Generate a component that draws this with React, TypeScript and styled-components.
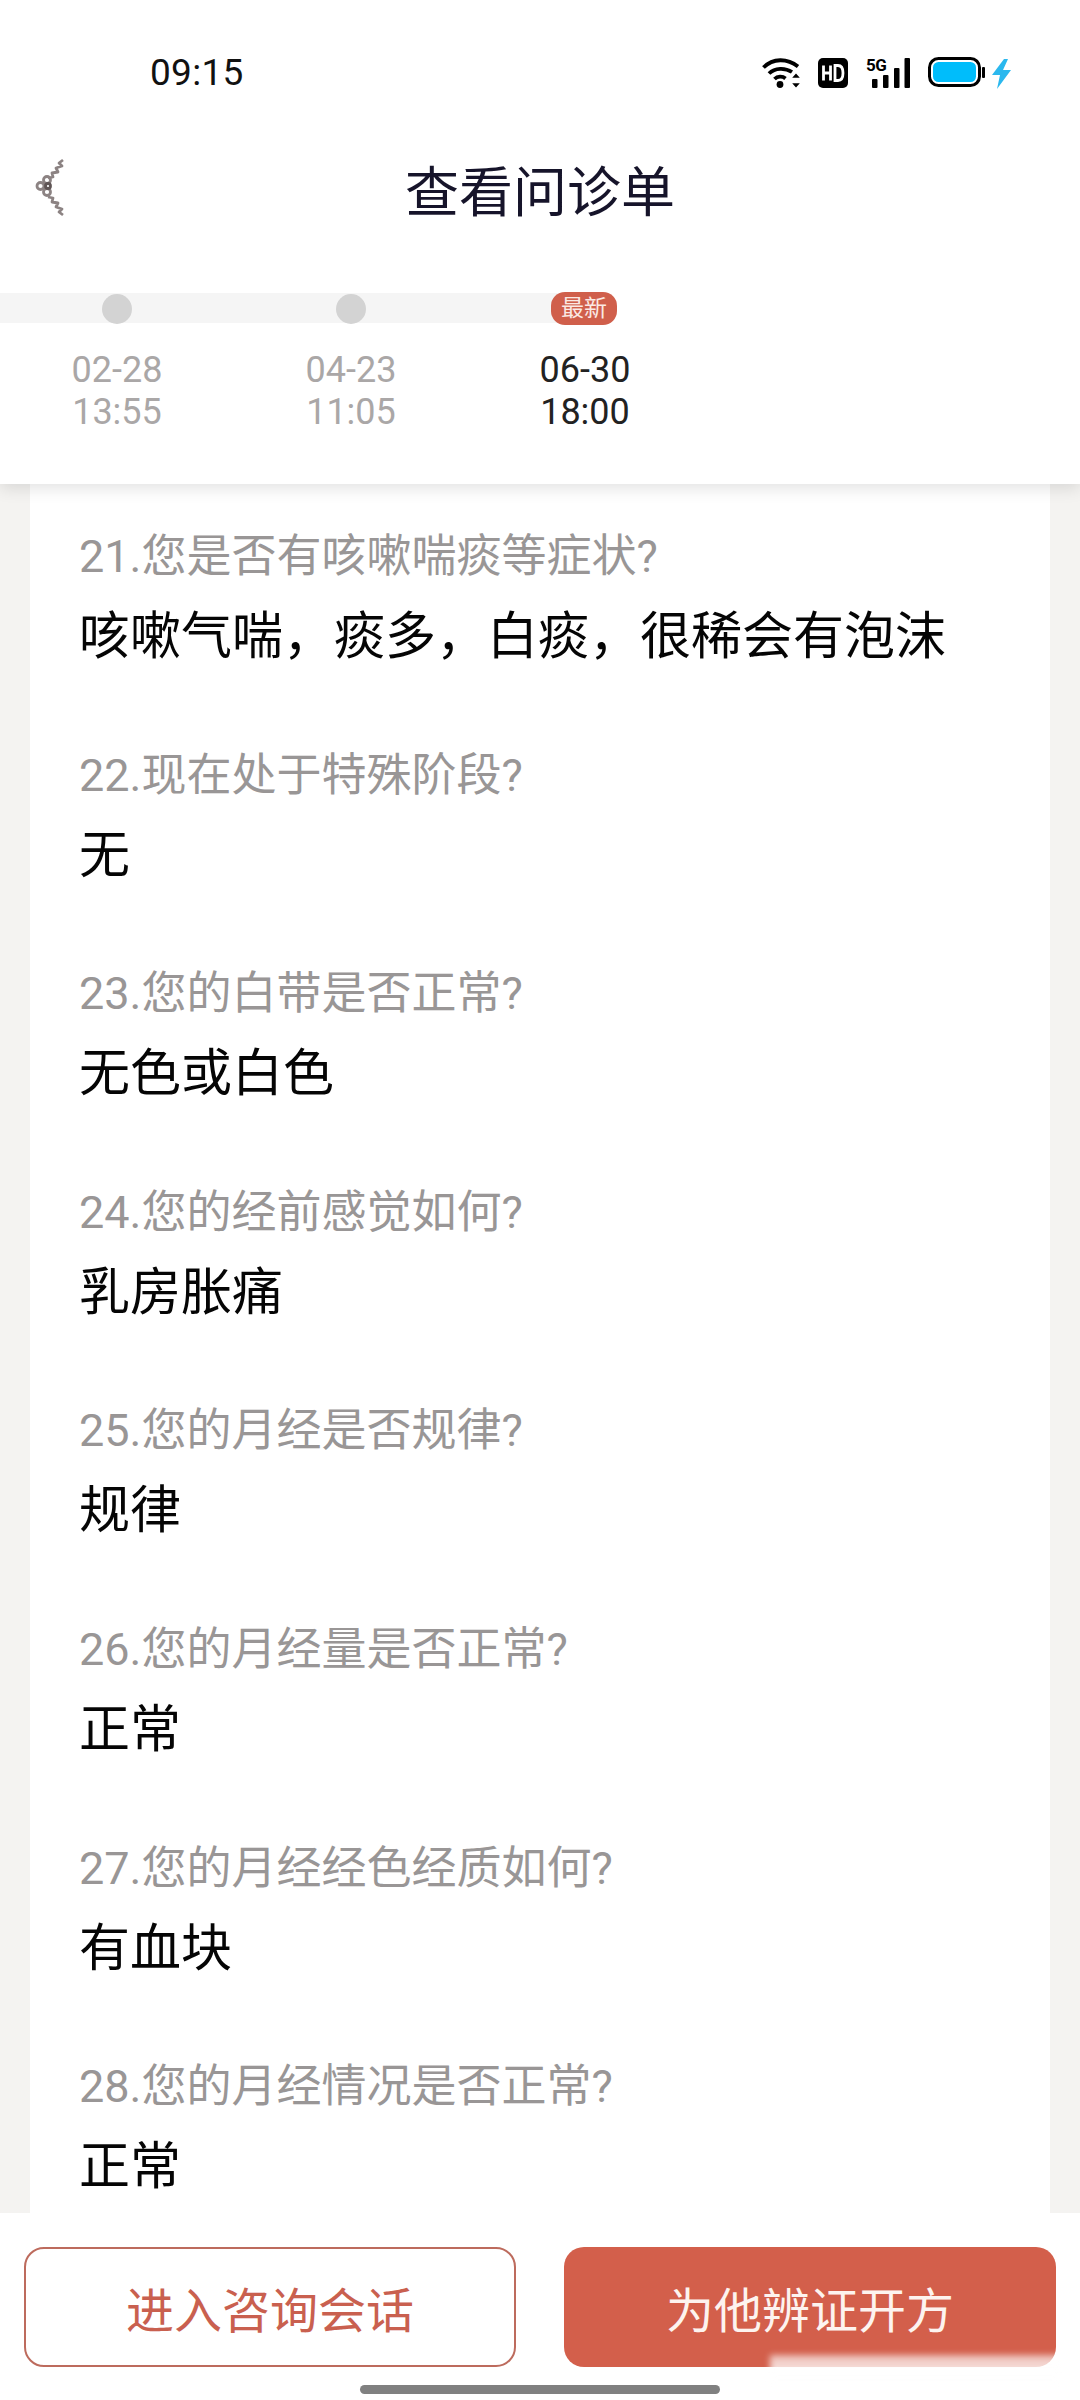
import React, { FC } from "react";
import styled, { createGlobalStyle } from "styled-components";

const GlobalStyle = createGlobalStyle`
  html, body {
    margin: 0;
    padding: 0;
    background: #ffffff;
    font-family: Roboto, "Noto Sans CJK SC", sans-serif;
  }
`;

const Page = styled("div")`
  width: 1080px;
  height: 2400px;
  display: flex;
  flex-direction: column;
  position: relative;
  overflow: hidden;
  background: #f4f3f1;
`;

const Header = styled("header")`
  background: #ffffff;
  height: 484px;
  flex-shrink: 0;
  box-shadow: 0 4px 16px rgba(0, 0, 0, 0.12);
  position: relative;
  z-index: 2;
`;

const StatusBar = styled("div")`
  height: 57px;
  padding: 44px 66px 0 150px;
  display: flex;
  align-items: center;
  justify-content: space-between;
`;

const Clock = styled("span")`
  font-size: 37px;
  font-weight: 400;
  letter-spacing: 0.3px;
  color: #111111;
`;

const StatusIcons = styled("div")`
  display: flex;
  align-items: center;
`;

const SignalGroup = styled("div")`
  position: relative;
  width: 44px;
  height: 30px;
  margin-right: 18px;
  display: flex;
`;

const NetworkLabel = styled("span")`
  position: absolute;
  left: 0;
  top: -1px;
  font-size: 17px;
  line-height: 17px;
  font-weight: 700;
  letter-spacing: -0.5px;
  color: #000000;
`;

const NavBar = styled("div")`
  height: 120px;
  margin-top: 27px;
  position: relative;
  display: flex;
  align-items: center;
  justify-content: center;
`;

const BackButton = styled("button")`
  position: absolute;
  left: 34px;
  top: 29px;
  width: 32px;
  height: 60px;
  padding: 0;
  border: 0;
  background: none;
`;

const Title = styled("h1")`
  margin: 0;
  font-size: 54px;
  font-weight: 400;
  color: #16142a;
`;

const Timeline = styled("div")`
  margin-top: 44px;
  position: relative;
`;

const Track = styled("div")`
  position: absolute;
  left: 0;
  top: 1px;
  width: 584px;
  height: 30px;
  background: #f5f5f5;
`;

const Stops = styled("div")`
  display: flex;
  position: relative;
`;

const Stop = styled("div")`
  width: 234px;
  display: flex;
  flex-direction: column;
  align-items: center;
`;

const MarkerRow = styled("div")`
  height: 33px;
  display: flex;
  align-items: center;
  justify-content: center;
`;

const Dot = styled("span")`
  width: 30px;
  height: 30px;
  border-radius: 50%;
  background: #d3d3d3;
`;

const NewBadge = styled("span")`
  width: 66px;
  height: 33px;
  margin-left: -2px;
  border-radius: 14px;
  background: #d05f4b;
  color: #fbe9e4;
  font-size: 23px;
  line-height: 33px;
  text-align: center;
`;

const Stamp = styled("div")<{ $active?: boolean }>`
  margin-top: 24px;
  font-size: 36px;
  line-height: 42px;
  text-align: center;
  color: ${({ $active }) => ($active ? "#222222" : "#aaa7a7")};
`;

const Body = styled("main")`
  flex: 1;
  min-height: 0;
  margin: 0 30px;
  padding: 48px 49px 0;
  background: #ffffff;
  overflow: hidden;
`;

const QA = styled("section")`
  height: 218.6px;
`;

const Question = styled("div")`
  font-size: 45px;
  line-height: 50px;
  color: #999696;
`;

const Answer = styled("div")`
  margin-top: 28px;
  font-size: 51px;
  line-height: 54px;
  color: #050505;
`;

const Footer = styled("footer")`
  height: 187px;
  flex-shrink: 0;
  background: #ffffff;
  box-sizing: border-box;
  padding: 34px 24px 0 24px;
  display: flex;
  justify-content: space-between;
  align-items: flex-start;
`;

const ActionButton = styled("button")<{ $primary?: boolean }>`
  width: 492px;
  height: 120px;
  border-radius: 20px;
  box-sizing: border-box;
  border: ${({ $primary }) => ($primary ? "0" : "2px solid #bd6b5d")};
  background: ${({ $primary }) => ($primary ? "#d35f4b" : "#ffffff")};
  color: ${({ $primary }) => ($primary ? "#fdf3ef" : "#c9604f")};
  font-family: inherit;
  font-size: 48px;
  padding: 0;
`;

const HomeIndicator = styled("div")`
  position: absolute;
  left: 360px;
  top: 2385px;
  width: 360px;
  height: 9px;
  border-radius: 5px;
  background: #808080;
`;

const WatermarkFade = styled("div")`
  position: absolute;
  left: 770px;
  top: 2355px;
  width: 290px;
  height: 40px;
  background: linear-gradient(to bottom, rgba(255, 255, 255, 0.6), #ffffff 70%);
  filter: blur(3px);
`;

const items = [
  { q: "21.您是否有咳嗽喘痰等症状?", a: "咳嗽气喘\uFF0C痰多\uFF0C白痰\uFF0C很稀会有泡沫" },
  { q: "22.现在处于特殊阶段?", a: "无" },
  { q: "23.您的白带是否正常?", a: "无色或白色" },
  { q: "24.您的经前感觉如何?", a: "乳房胀痛" },
  { q: "25.您的月经是否规律?", a: "规律" },
  { q: "26.您的月经量是否正常?", a: "正常" },
  { q: "27.您的月经经色经质如何?", a: "有血块" },
  { q: "28.您的月经情况是否正常?", a: "正常" },
];

const stamps = [
  { date: "02-28", time: "13:55" },
  { date: "04-23", time: "11:05" },
  { date: "06-30", time: "18:00", latest: true },
];

const WifiIcon: FC = () => (
  <svg width="40" height="31" viewBox="0 0 40 31" style={{ marginRight: 16 }}>
    <g fill="none" stroke="#000" strokeWidth="3.8">
      <path d="M1.5 10.5C11 1 25 1 36 9.5" />
      <path d="M7 16.5C13 10.5 23 10.5 30 15" />
      <path d="M12.5 22c3-3 8-3 11-.5" />
    </g>
    <circle cx="18" cy="27.5" r="3.4" fill="#000" />
    <path d="M34 16.5l3.8 4.2h-7.600zM34 30.500l-3.800-4.200h7.600z" fill="#000" />
  </svg>
);

const HdIcon: FC = () => (
  <svg width="30" height="30" viewBox="0 0 30 30" style={{ marginRight: 18 }}>
    <rect width="30" height="30" rx="5" fill="#000" />
    <path
      d="M5.5 7.500v15M12.5 7.500v15M5.500 15h7M17 7.500v15h3c3.500 0 5-2.500 5-7.500s-1.500-7.500-5-7.500z"
      fill="none"
      stroke="#fff"
      strokeWidth="2.8"
    />
  </svg>
);

const SignalBars: FC = () => (
  <svg width="44" height="30" viewBox="0 0 44 30">
    <rect x="6" y="21" width="5.500" height="9" rx="1" fill="#000" />
    <rect x="17" y="17" width="5.500" height="13" rx="1" fill="#000" />
    <rect x="28" y="10" width="5.500" height="20" rx="1" fill="#000" />
    <rect x="38.500" y="0" width="5.500" height="30" rx="1" fill="#000" />
  </svg>
);

const BatteryIcon: FC = () => (
  <svg width="86" height="32" viewBox="0 0 86 32">
    <rect x="1.500" y="1.500" width="50" height="27" rx="9" fill="#fff" stroke="#000" strokeWidth="3" />
    <rect x="5" y="5" width="43" height="20" rx="5.500" fill="#00bdfb" />
    <rect x="54" y="10" width="3" height="11" rx="1" fill="#000" />
    <path d="M76 2L64 18h8l-3 14 14-19h-8l5-11z" fill="#2bb8ee" />
  </svg>
);

const BackIcon: FC = () => (
  <svg width="32" height="60" viewBox="0 0 32 60">
    <g fill="none" stroke="#8c8383" strokeWidth="2.800" strokeLinejoin="round">
      <path d="M29 3l-4 3 3 3-6 2 2 4-6 1 1 4-5 1" />
      <path d="M29 58l-4-3 3-3-6-2 2-4-6-1 1-4-5-1" />
      <circle cx="6.500" cy="29" r="3.500" />
      <circle cx="13" cy="23" r="3.500" />
      <circle cx="13" cy="35" r="3.500" />
      <circle cx="14" cy="29" r="2.500" stroke="#5f5555" />
    </g>
  </svg>
);

const App: FC = () => {
  return (
    <Page>
      <GlobalStyle />
      <Header>
        <StatusBar>
          <Clock>09:15</Clock>
          <StatusIcons>
            <WifiIcon />
            <HdIcon />
            <SignalGroup>
              <NetworkLabel>5G</NetworkLabel>
              <SignalBars />
            </SignalGroup>
            <BatteryIcon />
          </StatusIcons>
        </StatusBar>
        <NavBar>
          <BackButton>
            <BackIcon />
          </BackButton>
          <Title>查看问诊单</Title>
        </NavBar>
        <Timeline>
          <Track />
          <Stops>
            {stamps.map((s) => (
              <Stop key={s.date}>
                <MarkerRow>{s.latest ? <NewBadge>最新</NewBadge> : <Dot />}</MarkerRow>
                <Stamp $active={s.latest}>
                  {s.date}
                  <br />
                  {s.time}
                </Stamp>
              </Stop>
            ))}
          </Stops>
        </Timeline>
      </Header>
      <Body>
        {items.map((item) => (
          <QA key={item.q}>
            <Question>{item.q}</Question>
            <Answer>{item.a}</Answer>
          </QA>
        ))}
      </Body>
      <Footer>
        <ActionButton>进入咨询会话</ActionButton>
        <ActionButton $primary>为他辨证开方</ActionButton>
      </Footer>
      <WatermarkFade />
      <HomeIndicator />
    </Page>
  );
};

export default App;
